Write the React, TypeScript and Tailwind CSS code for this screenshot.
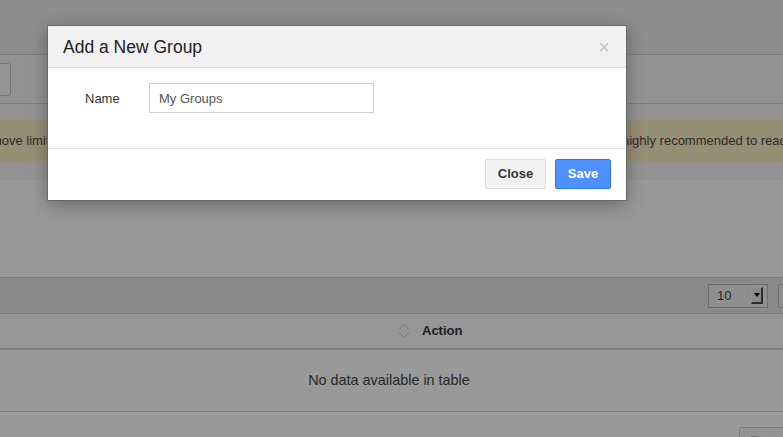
import React from 'react'

function SortIcon() {
  return (
    <svg width="12" height="16" viewBox="0 0 12 16" fill="none" stroke="#c4c4c4" strokeWidth={1}>
      <path d="M1 6.5 L6 1.5 L11 6.5" />
      <path d="M1 9.5 L6 14.5 L11 9.5" />
    </svg>
  )
}

function PageBehind() {
  return (
    <div className="flex flex-col h-full">
      {/* top bar */}
      <div className="h-[55px] shrink-0 bg-[#ececec] border-b border-[#d2d2d2]" />

      {/* search toolbar */}
      <div className="h-[49px] shrink-0 bg-[#f4f4f4] border-b border-[#d2d2d2] flex items-center">
        <div className="ml-[-10px] h-[33px] w-[21px] rounded-[3px] border border-[#c2c2c2] bg-[#f7f7f7]" />
      </div>

      {/* warning */}
      <div className="pt-[16px] shrink-0">
        <div className="h-[41px] bg-[#fbeec1] flex items-center overflow-hidden whitespace-nowrap text-[13px] text-[#4a4a4a]">
          <span className="ml-[-38px] w-[660px] shrink-0 overflow-hidden">To remove limits, please upgrade your account. It is</span>
          <span className="shrink-0">highly recommended to read the documentation first.</span>
        </div>
      </div>

      {/* spacer + panel */}
      <div className="h-[19px] shrink-0" />
      <div className="h-[98px] shrink-0 bg-[#fdfdfd] border-b border-[#d4d4d4]" />

      {/* table toolbar */}
      <div className="h-[36px] shrink-0 bg-[#e6e6e6] border-b border-[#d4d4d4] flex items-center justify-end gap-[10px] overflow-hidden">
        <div className="h-[24px] w-[60px] shrink-0 border border-[#b8b8b8] bg-[#efefef] flex items-center justify-between pl-[8px] pr-[4px]">
          <span className="text-[13px] text-[#444]">10</span>
          <div className="h-[17px] w-[12px] bg-[#e4e4e4] border-t border-l border-t-[#f4f4f4] border-l-[#f4f4f4] border-r-2 border-b-2 border-r-[#4a4a4a] border-b-[#4a4a4a] flex items-center justify-center">
            <svg width="6" height="4" viewBox="0 0 6 4">
              <path d="M0 0 H6 L3 4 Z" fill="#111" />
            </svg>
          </div>
        </div>
        <div className="h-[24px] w-[30px] shrink-0 mr-[-25px] border border-[#b8b8b8] bg-[#efefef]" />
      </div>

      {/* table header */}
      <div className="h-[36px] shrink-0 bg-[#fafafa] border-b-2 border-[#d4d4d4] flex items-center">
        <div className="w-[398px] shrink-0" />
        <SortIcon />
        <span className="ml-[12px] text-[13px] font-bold text-[#333]">Action</span>
      </div>

      {/* empty row */}
      <div className="h-[62px] shrink-0 bg-white border-b border-[#d4d4d4] flex items-center justify-center pr-[5px]">
        <span className="text-[14.4px] text-[#444]">No data available in table</span>
      </div>

      {/* pagination */}
      <div className="flex-1 bg-white flex justify-end items-start pt-[15px] overflow-hidden">
        <div className="h-[26px] w-[60px] mr-[-16px] border border-[#d0d0d0] rounded-[2px] bg-[#f7f7f7] px-[10px] pt-[4px] text-[12px] text-[#bbb]">
          First
        </div>
      </div>
    </div>
  )
}

export default function App() {
  return (
    <div className="relative h-[437px] w-[783px] overflow-hidden bg-[#f4f4f4] font-['Liberation_Sans',Arial,sans-serif]">
      <PageBehind />

      {/* backdrop */}
      <div className="absolute inset-0 bg-black/40" />

      {/* modal */}
      <div className="absolute left-[47px] top-[25px] w-[580px] bg-white border border-[#6a6a6a] shadow-[0_4px_16px_rgba(0,0,0,0.3)]">
        <div className="h-[42px] bg-[#f1f1f1] border-b border-[#dedede] flex items-center justify-between pl-[15px] pr-[16px]">
          <h2 className="text-[17.5px] text-[#222] mt-[2px]">Add a New Group</h2>
          <button className="text-[20px] leading-none text-[#c4c4c4] mt-[1px]">×</button>
        </div>

        <div className="h-[80px] pt-[15px] pl-[37px] flex items-start">
          <label className="w-[64px] h-[30px] flex items-center pt-[1px] text-[13px] text-[#333]">Name</label>
          <div className="w-[225px] h-[30px] border border-[#cfcfcf] flex items-center pl-[9px] pt-[1px] text-[13px] text-[#555]">
            My Groups
          </div>
        </div>

        <div className="h-[52px] border-t border-[#e5e5e5] flex justify-end items-start pt-[10px] pr-[15px] gap-[9px]">
          <button className="w-[61px] h-[30px] rounded-[2px] border border-[#dcdcdc] bg-[#f3f3f3] text-[13px] font-bold text-[#333]">
            Close
          </button>
          <button className="w-[56px] h-[30px] rounded-[2px] border border-[#3079ed] bg-[#4d90fe] text-[13px] font-bold text-white">
            Save
          </button>
        </div>
      </div>
    </div>
  )
}
